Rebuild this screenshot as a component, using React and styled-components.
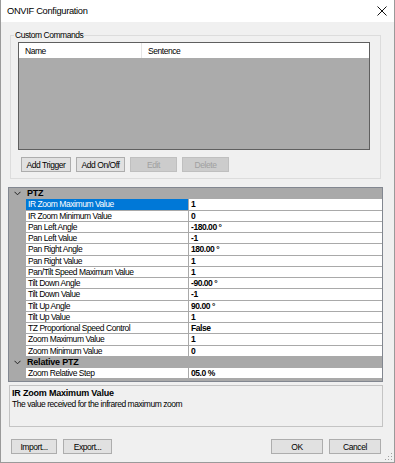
import styled, { createGlobalStyle } from "styled-components";

const GlobalStyle = createGlobalStyle`
  html, body {
    margin: 0;
    padding: 0;
    background: #f0f0f0;
  }
  body {
    font-family: "Liberation Sans", Arial, sans-serif;
  }
`;

const ptzRows = [
  ["IR Zoom Maximum Value", "1"],
  ["IR Zoom Minimum Value", "0"],
  ["Pan Left Angle", "-180.00 °"],
  ["Pan Left Value", "-1"],
  ["Pan Right Angle", "180.00 °"],
  ["Pan Right Value", "1"],
  ["Pan/Tilt Speed Maximum Value", "1"],
  ["Tilt Down Angle", "-90.00 °"],
  ["Tilt Down Value", "-1"],
  ["Tilt Up Angle", "90.00 °"],
  ["Tilt Up Value", "1"],
  ["TZ Proportional Speed Control", "False"],
  ["Zoom Maximum Value", "1"],
  ["Zoom Minimum Value", "0"],
];

const relativeRows = [["Zoom Relative Step", "05.0 %"]];

function Chevron() {
  return (
    <svg width="7" height="5" viewBox="0 0 7 5">
      <polyline
        points="0.5,0.8 3.5,3.8 6.5,0.8"
        fill="none"
        stroke="#222"
        strokeWidth="1"
      />
    </svg>
  );
}

function CloseIcon() {
  return (
    <svg width="10" height="10" viewBox="0 0 10 10">
      <line x1="0.5" y1="0.5" x2="9.5" y2="9.5" stroke="#111" strokeWidth="1" />
      <line x1="9.5" y1="0.5" x2="0.5" y2="9.5" stroke="#111" strokeWidth="1" />
    </svg>
  );
}

function Category({ title, rows, selected }) {
  return (
    <>
      <CategoryRow>
        <Gutter>
          <Chevron />
        </Gutter>
        <CategoryLabel>{title}</CategoryLabel>
      </CategoryRow>
      {rows.map(([name, value]) => (
        <PropRow key={name}>
          <Gutter />
          <NameCell $selected={name === selected}>{name}</NameCell>
          <ValueCell>{value}</ValueCell>
        </PropRow>
      ))}
    </>
  );
}

export default function App() {
  return (
    <Window>
      <GlobalStyle />
      <TitleBar>
        <Title>ONVIF Configuration</Title>
        <CloseIcon />
      </TitleBar>
      <Body>
        <GroupBox>
          <GroupTitle>Custom Commands</GroupTitle>
          <ListView>
            <ListHeader>
              <HeaderCol $width="116px">Name</HeaderCol>
              <HeaderCol>Sentence</HeaderCol>
            </ListHeader>
          </ListView>
          <ButtonRow>
            <Button $width="50px">Add Trigger</Button>
            <Button $width="49px">Add On/Off</Button>
            <Button $width="47px" disabled>
              Edit
            </Button>
            <Button $width="47px" disabled>
              Delete
            </Button>
          </ButtonRow>
        </GroupBox>

        <PropertyGrid>
          <Category title="PTZ" rows={ptzRows} selected="IR Zoom Maximum Value" />
          <Category title="Relative PTZ" rows={relativeRows} />
        </PropertyGrid>

        <Description>
          <DescTitle>IR Zoom Maximum Value</DescTitle>
          <DescText>The value received for the infrared maximum zoom</DescText>
        </Description>

        <Footer>
          <FooterGroup>
            <Button $width="46px">Import...</Button>
            <Button $width="49px">Export...</Button>
          </FooterGroup>
          <FooterGroup>
            <Button $width="52px">OK</Button>
            <Button $width="52px">Cancel</Button>
          </FooterGroup>
        </Footer>
      </Body>
      <Grip>
        <svg width="9" height="9" viewBox="0 0 9 9">
          <rect x="7" y="1" width="1" height="1" fill="#a0a0a0" />
          <rect x="4" y="4" width="1" height="1" fill="#a0a0a0" />
          <rect x="7" y="4" width="1" height="1" fill="#a0a0a0" />
          <rect x="1" y="7" width="1" height="1" fill="#a0a0a0" />
          <rect x="4" y="7" width="1" height="1" fill="#a0a0a0" />
          <rect x="7" y="7" width="1" height="1" fill="#a0a0a0" />
        </svg>
      </Grip>
    </Window>
  );
}

const Window = styled.div`
  position: relative;
  width: 395px;
  height: 463px;
  box-sizing: border-box;
  border: 1px solid #9a9a9a;
  border-top: none;
  background: #f0f0f0;
  display: flex;
  flex-direction: column;
  font-size: 8.5px;
  letter-spacing: -0.45px;
  color: #000;
`;

const TitleBar = styled.div`
  height: 22px;
  background: #fff;
  display: flex;
  align-items: center;
  justify-content: space-between;
  padding: 0 7px 0 6px;
`;

const Title = styled.div`
  font-size: 9.3px;
  letter-spacing: -0.3px;
`;

const Body = styled.div`
  display: flex;
  flex-direction: column;
  padding: 0 12px 0 7px;
`;

const GroupBox = styled.div`
  position: relative;
  margin: 13px 0 0 2px;
  width: 371px;
  box-sizing: border-box;
  border: 1px solid #dcdcdc;
  padding: 6px 10px 6px 7px;
`;

const GroupTitle = styled.div`
  position: absolute;
  top: -6px;
  left: 3px;
  padding: 0 1px;
  line-height: 10px;
  background: #f0f0f0;
`;

const ListView = styled.div`
  width: 352px;
  height: 108px;
  box-sizing: border-box;
  border: 1px solid #5f5f5f;
  background: #ababab;
`;

const ListHeader = styled.div`
  display: flex;
  height: 15px;
  background: #fff;
`;

const HeaderCol = styled.div`
  width: ${(p) => p.$width || "auto"};
  flex: ${(p) => (p.$width ? "none" : "1")};
  display: flex;
  align-items: center;
  padding-left: 6px;
  border-right: ${(p) => (p.$width ? "1px solid #e5e5e5" : "none")};
`;

const ButtonRow = styled.div`
  display: flex;
  gap: 5px;
  margin-top: 7px;
  padding-left: 3px;
`;

const Button = styled.button`
  width: ${(p) => p.$width};
  height: 15px;
  padding: 0;
  box-sizing: border-box;
  border: 1px solid #adadad;
  background: #e1e1e1;
  font-family: "Liberation Sans", Arial, sans-serif;
  font-size: 8.5px;
  letter-spacing: -0.45px;
  color: #000;

  &:disabled {
    background: #cccccc;
    border-color: #bfbfbf;
    color: #a0a0a0;
  }
`;

const PropertyGrid = styled.div`
  margin-top: 8px;
  width: 375px;
  box-sizing: border-box;
  border: 1px solid #828790;
  background: #a9a9a9;
  padding-bottom: 2px;
  display: flex;
  flex-direction: column;
`;

const PropRow = styled.div`
  display: grid;
  grid-template-columns: 16px 162px 1fr;
  column-gap: 1px;
  height: 11.25px;
  box-sizing: border-box;
  padding-bottom: 1px;
`;

const CategoryRow = styled.div`
  display: flex;
  align-items: center;
  height: 11.25px;
  box-sizing: border-box;
  padding-bottom: 1px;
`;

const Gutter = styled.div`
  width: 16px;
  display: flex;
  align-items: center;
  justify-content: center;
  padding-top: 1px;
`;

const CategoryLabel = styled.div`
  font-weight: bold;
  font-size: 9px;
  letter-spacing: -0.2px;
  padding-left: 2px;
`;

const NameCell = styled.div`
  display: flex;
  align-items: center;
  padding-left: 2px;
  white-space: nowrap;
  overflow: hidden;
  background: ${(p) => (p.$selected ? "#0078d7" : "#fff")};
  color: ${(p) => (p.$selected ? "#fff" : "#000")};
`;

const ValueCell = styled.div`
  display: flex;
  align-items: center;
  padding-left: 2px;
  background: #fff;
  font-weight: bold;
`;

const Description = styled.div`
  margin: 3px 0 0 1px;
  width: 374px;
  height: 42px;
  box-sizing: border-box;
  border: 1px solid #c4c4c4;
  padding: 2px 2px;
`;

const DescTitle = styled.div`
  font-weight: bold;
  font-size: 9px;
  letter-spacing: -0.2px;
  line-height: 11px;
`;

const DescText = styled.div`
  line-height: 10px;
`;

const Footer = styled.div`
  display: flex;
  justify-content: space-between;
  margin: 12px 1px 0 3px;
`;

const FooterGroup = styled.div`
  display: flex;
  gap: 6px;
`;

const Grip = styled.div`
  position: absolute;
  right: 1px;
  bottom: 1px;
  line-height: 0;
`;
